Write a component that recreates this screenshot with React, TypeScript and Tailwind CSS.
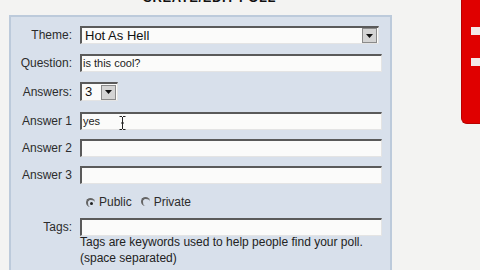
import React from 'react';

function Field({ label, children, className = '' }: { label: string; children: React.ReactNode; className?: string }) {
  return (
    <div className={`flex items-center ${className}`}>
      <div className="w-[62px] pr-[1px] text-right text-[12px] leading-none text-[#2c2c2c]">{label}</div>
      <div className="ml-[7px] flex-1">{children}</div>
    </div>
  );
}

function TextBox({ value = '', children }: { value?: string; children?: React.ReactNode }) {
  return (
    <div className="relative flex h-[18px] w-[302px] items-center border-t-2 border-l-2 border-b border-r border-t-[#5a5a5a] border-l-[#5a5a5a] border-b-[#e4e4e4] border-r-[#e4e4e4] bg-[#fbfbfa] pl-[1px] text-[11px] text-[#222]">
      {value}
      {children}
    </div>
  );
}

function Arrow() {
  return (
    <div className="flex h-[15px] w-[15px] items-center justify-center border border-[#8a8a8a] bg-[#d4d4d4]">
      <svg width="7" height="4" viewBox="0 0 7 4">
        <path d="M0 0h7L3.5 4z" fill="#111" />
      </svg>
    </div>
  );
}

function Radio({ checked }: { checked?: boolean }) {
  return (
    <span className="relative inline-flex h-[9px] w-[9px] items-center justify-center rounded-full border-l-2 border-t-2 border-[#666] border-r-transparent border-b-transparent">
      {checked && <span className="h-[3px] w-[3px] rounded-full bg-[#222]" />}
    </span>
  );
}

export default function App() {
  return (
    <div className="flex h-[270px] w-[480px] items-start overflow-hidden bg-[#f3f3f2] font-['Liberation_Sans',Arial,sans-serif]">
      <div className="w-[400px] shrink-0">
        <div className="-mt-[8px] h-[13px] pl-[115px] text-[13px] font-bold leading-[12px] tracking-[0.6px] text-[#111]">
          - - - CREATE/EDIT POLL - - -
        </div>
        <div className="ml-[9px] mt-[10px] h-[300px] w-[383px] border-2 border-[#bccadb] bg-[#d8e0eb] pt-[9px]">
          <Field label="Theme:">
            <div className="flex h-[18px] w-[299px] items-center justify-between border-t-2 border-l-2 border-b border-r border-t-[#5a5a5a] border-l-[#5a5a5a] border-b-[#e4e4e4] border-r-[#e4e4e4] bg-[#fbfbfa] pl-[3px] pr-[1px] text-[13px] text-[#111]">
              <span>Hot As Hell</span>
              <Arrow />
            </div>
          </Field>
          <Field label="Question:" className="mt-[10px]">
            <TextBox value="is this cool?" />
          </Field>
          <Field label="Answers:" className="mt-[10px]">
            <div className="flex h-[19px] w-[38px] items-center justify-between border-t-2 border-l-2 border-b border-r border-t-[#5a5a5a] border-l-[#5a5a5a] border-b-[#e4e4e4] border-r-[#e4e4e4] bg-[#fbfbfa] pl-[3px] pr-[1px] text-[13px] text-[#111]">
              <span>3</span>
              <Arrow />
            </div>
          </Field>
          <Field label="Answer 1" className="mt-[11px]">
            <TextBox value="yes">
              <svg className="absolute left-[37px] top-[2px]" width="7" height="14" viewBox="0 0 7 14">
                <path d="M0.5 0.5h2.5M4 0.5h2.5M3.5 1v12M0.5 13.5h2.5M4 13.5h2.5M2 7h3" stroke="#222" strokeWidth="1" fill="none" />
              </svg>
            </TextBox>
          </Field>
          <Field label="Answer 2" className="mt-[9px]">
            <TextBox />
          </Field>
          <Field label="Answer 3" className="mt-[9px]">
            <TextBox />
          </Field>
          <div className="mt-[11px] flex h-[14px] items-center pl-[75px] text-[12px] leading-none text-[#2c2c2c]">
            <Radio checked />
            <span className="ml-[4px]">Public</span>
            <span className="ml-[9px]">
              <Radio />
            </span>
            <span className="ml-[4px]">Private</span>
          </div>
          <Field label="Tags:" className="mt-[9px]">
            <TextBox />
          </Field>
          <div className="ml-[69px] -mt-[2px] text-[12px] leading-[16px] text-[#222]">
            Tags are keywords used to help people find your poll.
            <br />
            (space separated)
          </div>
        </div>
      </div>
      <div className="ml-auto h-[124px] w-[19px] rounded-bl-[6px] border-l border-b border-[#b80000] bg-[#e00000] pl-[9px] pt-[27px]">
        <div className="h-[8px] w-full bg-[#f4e8e8]" />
        <div className="mt-[23px] h-[8px] w-full bg-[#f4e8e8]" />
      </div>
    </div>
  );
}
